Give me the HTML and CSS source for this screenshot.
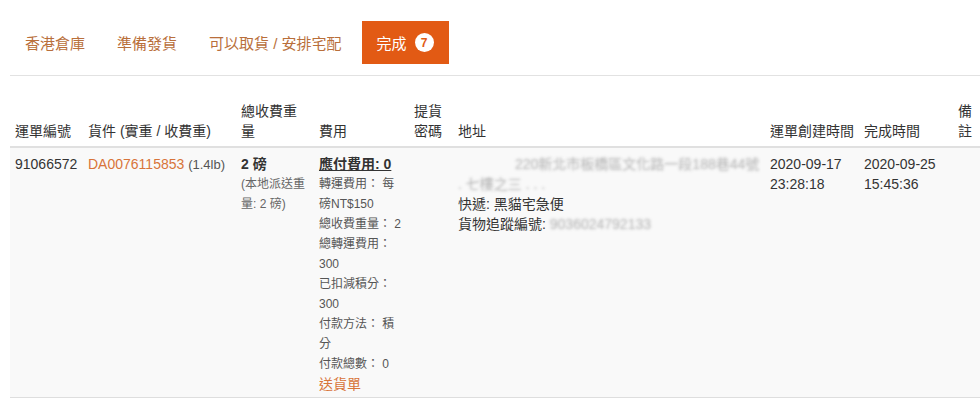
FILE: index.html
```html
<!DOCTYPE html>
<html lang="zh-Hant">
<head>
  <meta charset="UTF-8" />
  <meta name="viewport" content="width=device-width, initial-scale=1.0" />
  <title>運單 - 完成</title>
  <link rel="stylesheet" href="styles.css">
</head>
<body>
  <div class="page">
    <ul class="tabs">
      <li class="tab">香港倉庫</li>
      <li class="tab">準備發貨</li>
      <li class="tab">可以取貨 / 安排宅配</li>
      <li class="tab active">完成 <span class="badge">7</span></li>
    </ul>

    <table class="orders">
      <colgroup>
        <col class="c-no">
        <col class="c-item">
        <col class="c-weight">
        <col class="c-fee">
        <col class="c-code">
        <col class="c-addr">
        <col class="c-created">
        <col class="c-done">
        <col class="c-note">
      </colgroup>
      <thead>
        <tr>
          <th>運單編號</th>
          <th>貨件 (實重 / 收費重)</th>
          <th>總收費重量</th>
          <th>費用</th>
          <th>提貨密碼</th>
          <th>地址</th>
          <th>運單創建時間</th>
          <th>完成時間</th>
          <th>備註</th>
        </tr>
      </thead>
      <tbody>
        <tr>
          <td>91066572</td>
          <td><a class="link">DA0076115853</a> <span class="small">(1.4lb)</span></td>
          <td>
            <div class="strong">2 磅</div>
            <div class="sub">(本地派送重量: 2 磅)</div>
          </td>
          <td>
            <div class="strong under">應付費用: 0</div>
            <div class="fee">轉運費用： 每磅NT$150</div>
            <div class="fee">總收費重量： 2</div>
            <div class="fee">總轉運費用： 300</div>
            <div class="fee">已扣減積分： 300</div>
            <div class="fee">付款方法： 積分</div>
            <div class="fee">付款總數： 0</div>
            <a class="link">送貨單</a>
          </td>
          <td></td>
          <td>
            <div class="addr-line"><span class="blur">220新北市板橋區文化路一段188巷44號</span></div>
            <div><span class="blur">. 七樓之三 . . .</span></div>
            <div>快遞: 黑貓宅急便</div>
            <div>貨物追蹤編號: <span class="blur">9036024792133</span></div>
          </td>
          <td>2020-09-17 23:28:18</td>
          <td>2020-09-25 15:45:36</td>
          <td></td>
        </tr>
      </tbody>
    </table>
  </div>
</body>
</html>
```

FILE: styles.css
```css
body {
  margin: 0;
  font-family: "Liberation Sans", "Noto Sans CJK TC", sans-serif;
  font-size: 14px;
  color: #333;
  background-color: #fff;
}

.page {
  padding: 21px 0 0 10px;
}

.tabs {
  display: flex;
  gap: 2px;
  list-style: none;
  margin: 0;
  padding: 0 0 11px;
  border-bottom: 1px solid #e2e2e2;
}

.tab {
  display: flex;
  align-items: center;
  height: 43px;
  padding: 0 15px;
  font-size: 15px;
  color: #b96f3b;
  box-sizing: border-box;
}

.tab.active {
  background-color: #e25a14;
  color: #fff;
  margin-left: 3px;
}

.badge {
  display: inline-flex;
  align-items: center;
  justify-content: center;
  width: 19px;
  height: 19px;
  margin-left: 8px;
  border-radius: 50%;
  background-color: #fff;
  color: #e25a14;
  font-size: 12px;
  font-weight: bold;
}

.orders {
  width: 970px;
  table-layout: fixed;
  border-collapse: collapse;
  margin-top: 20px;
  line-height: 20px;
}

.c-no { width: 73px; }
.c-item { width: 153px; }
.c-weight { width: 78px; }
.c-fee { width: 95px; }
.c-code { width: 44px; }
.c-addr { width: 312px; }
.c-created { width: 94px; }
.c-done { width: 94px; }
.c-note { width: 27px; }

th {
  font-weight: normal;
  text-align: left;
  vertical-align: bottom;
  padding: 5px;
  border-bottom: 2px solid #e0e0e0;
}

td {
  vertical-align: top;
  padding: 6px 4px 3px 5px;
  background-color: #f9f9f9;
  border-bottom: 1px solid #dedede;
}

.link {
  color: #d8743a;
  cursor: pointer;
}

.small {
  font-size: 13px;
  color: #555;
}

.strong {
  font-weight: bold;
}

.under {
  text-decoration: underline;
}

.sub {
  font-size: 12px;
  color: #666;
}

.fee {
  font-size: 12px;
  color: #555;
}

.addr-line {
  padding-left: 57px;
  white-space: nowrap;
  overflow: hidden;
}

.blur {
  color: transparent;
  text-shadow: 0 0 3px rgba(90, 90, 90, 0.45);
}
```
